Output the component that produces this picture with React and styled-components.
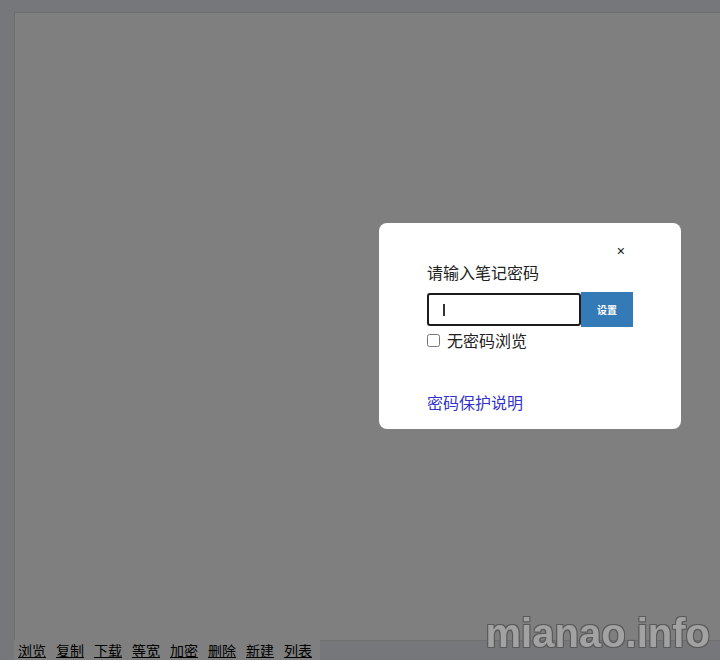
import styled, { createGlobalStyle } from "styled-components";

const GlobalStyle = createGlobalStyle`
  html, body {
    margin: 0;
    overflow: hidden;
    background: #eceef4;
    font-family: "Noto Sans CJK SC", "Liberation Sans", sans-serif;
  }
  body {
    padding: 12px 0 0 14px;
  }
`;

const Page = styled.div`
  display: flex;
  flex-direction: column;
  align-items: flex-start;
`;

const Editor = styled.textarea`
  display: block;
  box-sizing: border-box;
  width: 720px;
  height: 629px;
  margin: 0;
  border: 1px solid #dcdcdc;
  background: #fff;
  resize: none;
  outline: none;
`;

const Toolbar = styled.nav`
  display: flex;
  gap: 10px;
  margin-top: -1px;
  padding: 0 8px 0 4px;
  background: #fff;
  font-size: 14px;
  line-height: 20px;
`;

const ToolLink = styled.a`
  color: #000;
  text-decoration: underline;
  cursor: pointer;
`;

const Overlay = styled.div`
  position: fixed;
  inset: 0;
  background: rgba(0, 0, 0, 0.5);
`;

const Dialog = styled.div`
  position: fixed;
  left: 379px;
  top: 223px;
  width: 302px;
  box-sizing: border-box;
  padding: 18px 48px 16px;
  background: #fff;
  border-radius: 8px;
  display: flex;
  flex-direction: column;
`;

const CloseRow = styled.div`
  display: flex;
  justify-content: flex-end;
  padding-right: 8px;
  height: 20px;
  line-height: 20px;
`;

const Close = styled.span`
  font-family: "Liberation Sans", sans-serif;
  font-size: 14px;
  color: #111;
  cursor: pointer;
`;

const Title = styled.div`
  font-size: 16px;
  line-height: 22px;
  color: #222;
`;

const InputRow = styled.div`
  display: flex;
  align-items: center;
  margin-top: 9px;
`;

const PasswordBox = styled.div`
  box-sizing: border-box;
  width: 154px;
  height: 33px;
  border: 2px solid #1c1c1c;
  border-radius: 3px;
  display: flex;
  align-items: center;
  padding-left: 14px;
`;

const Caret = styled.span`
  width: 1.5px;
  height: 12px;
  background: #333;
`;

const SetButton = styled.button`
  width: 52px;
  height: 35px;
  border: none;
  margin: 0;
  background: #337ab7;
  color: #fff;
  font-family: "Noto Sans CJK SC", sans-serif;
  font-size: 10px;
  font-weight: bold;
  padding: 0;
`;

const CheckRow = styled.label`
  display: flex;
  align-items: center;
  gap: 7px;
  margin-top: 4px;
  font-size: 16px;
  line-height: 18px;
  color: #222;
`;

const Check = styled.input`
  width: 13px;
  height: 13px;
  margin: 0;
`;

const HelpLink = styled.a`
  margin-top: 42px;
  font-size: 16px;
  line-height: 22px;
  color: #3333cc;
  text-decoration: none;
  cursor: pointer;
`;

const Watermark = styled.div`
  position: fixed;
  right: 10px;
  bottom: 4px;
  font-family: "Liberation Sans", sans-serif;
  font-size: 40px;
  font-weight: bold;
  color: #a2a2a2;
  text-shadow: 1px 1px 0 #5a5a5a, -1px -1px 0 #5a5a5a, 1px -1px 0 #5a5a5a,
    -1px 1px 0 #5a5a5a;
`;

const tools = ["浏览", "复制", "下载", "等宽", "加密", "删除", "新建", "列表"];

export default function App() {
  return (
    <>
      <GlobalStyle />
      <Page>
        <Editor />
        <Toolbar>
          {tools.map((t) => (
            <ToolLink key={t}>{t}</ToolLink>
          ))}
        </Toolbar>
      </Page>
      <Overlay />
      <Dialog>
        <CloseRow>
          <Close>×</Close>
        </CloseRow>
        <Title>请输入笔记密码</Title>
        <InputRow>
          <PasswordBox>
            <Caret />
          </PasswordBox>
          <SetButton>设置</SetButton>
        </InputRow>
        <CheckRow>
          <Check type="checkbox" />
          无密码浏览
        </CheckRow>
        <HelpLink>密码保护说明</HelpLink>
      </Dialog>
      <Watermark>mianao.info</Watermark>
    </>
  );
}
